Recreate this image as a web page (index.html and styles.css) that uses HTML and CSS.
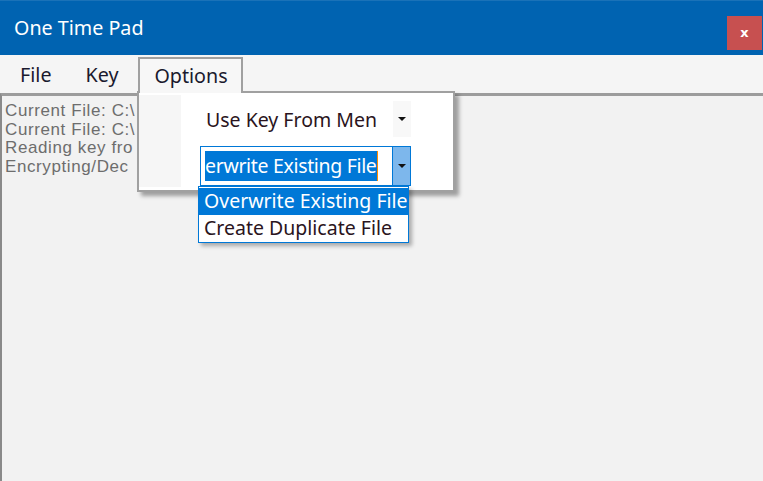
FILE: index.html
```html
<!DOCTYPE html>
<html>
<head>
<meta charset="utf-8">
<link rel="stylesheet" href="styles.css">
</head>
<body>
<div class="window">
  <div class="titlebar">
    <span class="title">One Time Pad</span>
    <span class="close">x</span>
  </div>
  <div class="menubar">
    <span class="menu-item file">File</span>
    <span class="menu-item key">Key</span>
    <span class="menu-item active">Options</span>
  </div>
  <div class="content">
    <div class="log">
      <div class="log-line">Current File: C:\</div>
      <div class="log-line">Current File: C:\</div>
      <div class="log-line">Reading key fro</div>
      <div class="log-line">Encrypting/Dec</div>
    </div>
  </div>
  <div class="popup">
    <div class="popup-strip"></div>
    <div class="popup-body">
      <div class="combo plain">
        <span class="combo-text">Use Key From Men</span>
        <span class="combo-btn"><span class="arrow"></span></span>
      </div>
      <div class="combo focused">
        <span class="combo-text"><span class="sel">erwrite Existing File</span><span class="caret"></span></span>
        <span class="combo-btn"><span class="arrow"></span></span>
      </div>
    </div>
  </div>
  <div class="droplist">
    <div class="drop-item hl">Overwrite Existing File</div>
    <div class="drop-item">Create Duplicate File</div>
  </div>
</div>
</body>
</html>
```

FILE: styles.css
```css
* { box-sizing: border-box; }
html, body { margin: 0; padding: 0; }
body {
  width: 763px;
  height: 481px;
  overflow: hidden;
  font-family: "Noto Sans", "Open Sans", sans-serif;
  background: #f2f2f2;
}
.window {
  position: relative;
  width: 763px;
  height: 481px;
  display: flex;
  flex-direction: column;
}
.titlebar {
  height: 55px;
  background: #0063b1;
  border-top: 1px solid #1a72b8;
  display: flex;
  align-items: center;
  justify-content: space-between;
  padding-left: 14px;
  flex-shrink: 0;
}
.title {
  color: #fff;
  font-size: 19.7px;
  margin-top: -1px;
}
.close {
  width: 35px;
  height: 34px;
  background: #c75050;
  color: #fff;
  font-family: "DejaVu Sans", sans-serif;
  font-weight: bold;
  font-size: 13px;
  display: flex;
  align-items: center;
  justify-content: center;
  margin-right: 1px;
  margin-top: 9px;
}
.menubar {
  height: 38px;
  background: #f5f5f5;
  display: flex;
  align-items: flex-end;
  flex-shrink: 0;
}
.menu-item {
  font-size: 19.7px;
  color: #1a1a2e;
  height: 36px;
  display: flex;
  align-items: center;
  padding-bottom: 2px;
}
.menu-item.file { margin-left: 20px; }
.menu-item.key { margin-left: 34px; }
.menu-item.active {
  border: 2px solid #a0a0a0;
  border-bottom: none;
  background: #f7f7f7;
  padding-left: 14px;
  width: 105px;
  margin-left: 20px;
  position: relative;
  z-index: 2;
}
.content {
  flex: 1;
  border-top: 3px solid #9c9c9c;
  border-left: 2px solid #8a8a8a;
  background: #f2f2f2;
  overflow: hidden;
}
.log {
  width: 135px;
  overflow: hidden;
  padding: 6px 0 0 3px;
  color: #6d6d6d;
  font-family: "Liberation Sans", Arial, sans-serif;
  font-size: 17px;
  letter-spacing: 0.6px;
  line-height: 18.6px;
  white-space: nowrap;
}
.popup {
  position: absolute;
  left: 137px;
  top: 91px;
  width: 318px;
  height: 101px;
  background: #fff;
  border: 2px solid #a0a0a0;
  box-shadow: 4px 4px 4px rgba(0,0,0,0.35);
  display: flex;
  padding: 2px 0 3px 0;
  z-index: 1;
}
.popup::before {
  content: "";
  position: absolute;
  left: 0;
  top: -2px;
  width: 103px;
  height: 2px;
  background: #fafafa;
}
.popup-strip {
  width: 42px;
  background: #f6f6f6;
}
.popup-body {
  flex: 1;
  padding: 6px 0 0 19px;
  display: flex;
  flex-direction: column;
  gap: 9px;
}
.combo {
  width: 211px;
  display: flex;
  align-items: stretch;
}
.combo.plain {
  height: 36px;
  background: #fff;
}
.combo.focused {
  height: 40px;
  border: 1px solid #0078d7;
  background: #fff;
}
.combo-text {
  flex: 1;
  display: flex;
  align-items: center;
  font-size: 19.5px;
  color: #2a1420;
  padding-left: 6px;
  overflow: hidden;
  white-space: nowrap;
}
.combo.focused .combo-text { padding-left: 4px; }
.sel {
  background: #0078d7;
  color: #fff;
  line-height: 30px;
  letter-spacing: -0.33px;
}
.caret {
  width: 1px;
  height: 30px;
  background: #ff8c00;
  flex-shrink: 0;
}
.combo-btn {
  width: 18px;
  flex-shrink: 0;
  display: flex;
  align-items: center;
  justify-content: center;
}
.combo.plain .combo-btn { background: #f8f8f8; }
.combo.focused .combo-btn {
  background: #7db7ec;
  border-left: 1px solid #0078d7;
}
.arrow {
  width: 0;
  height: 0;
  border-left: 4px solid transparent;
  border-right: 4px solid transparent;
  border-top: 4px solid #111;
}
.droplist {
  position: absolute;
  left: 198px;
  top: 186px;
  width: 211px;
  border: 1px solid #0078d7;
  background: #fff;
  box-shadow: 3px 3px 4px rgba(0,0,0,0.3);
  padding: 1px 0;
  z-index: 3;
}
.drop-item {
  font-size: 19.5px;
  height: 26.5px;
  line-height: 26px;
  padding-left: 5px;
  color: #2a1420;
  white-space: nowrap;
  overflow: hidden;
}
.drop-item.hl {
  background: #0078d7;
  color: #fff;
}
```
